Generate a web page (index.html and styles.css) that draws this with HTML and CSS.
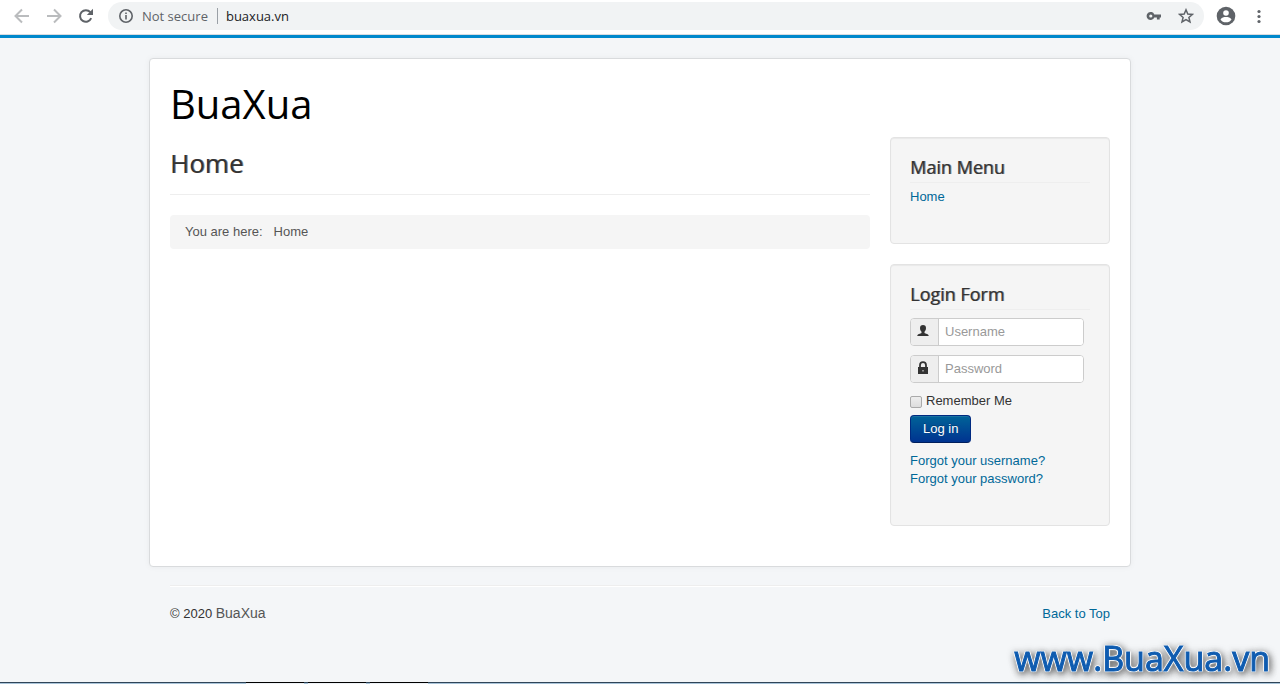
FILE: index.html
```html
<!DOCTYPE html>
<html lang="en">
<head>
    <meta charset="utf-8" />
    <meta name="viewport" content="width=device-width, initial-scale=1" />
    <title>Home</title>
    <link rel="stylesheet" href="styles.css">
</head>
<body id="top">
    <!-- Browser toolbar -->
    <div class="toolbar">
        <button class="tool disabled" type="button" aria-label="Back">
            <svg width="16" height="16" viewBox="0 0 16 16" fill="none" stroke="currentColor" stroke-width="2"><path d="M15 8H2M8 1.5L1.5 8L8 14.5"/></svg>
        </button>
        <button class="tool disabled" type="button" aria-label="Forward">
            <svg width="16" height="16" viewBox="0 0 16 16" fill="none" stroke="currentColor" stroke-width="2"><path d="M1 8H14M8 1.5L14.5 8L8 14.5"/></svg>
        </button>
        <button class="tool" type="button" aria-label="Reload">
            <svg width="16" height="16" viewBox="0 0 16 16"><path d="M13.2 10.2A5.8 5.8 0 1 1 12.3 4.2" fill="none" stroke="currentColor" stroke-width="2"/><path d="M15 .8V7H8.8Z" fill="currentColor"/></svg>
        </button>
        <div class="omnibox">
            <svg class="info" width="16" height="16" viewBox="0 0 16 16"><circle cx="8" cy="8" r="6.2" fill="none" stroke="currentColor" stroke-width="1.6"/><path d="M7.2 7h1.6v4.4H7.2zM7.2 4.4h1.6V6H7.2z" fill="currentColor"/></svg>
            <span class="secure">Not secure</span>
            <input class="url" type="text" value="buaxua.vn" aria-label="Address">
            <button class="tool" type="button" aria-label="Saved passwords">
                <svg width="16" height="16" viewBox="0 0 16 16"><path fill="currentColor" fill-rule="evenodd" d="M8.3 6.5H15V9.4H13.7V11.5H10.9V9.4H8.3A4 4 0 1 1 8.3 6.5ZM4.8 6.4A1.6 1.6 0 1 0 4.8 9.6A1.6 1.6 0 1 0 4.8 6.4Z"/></svg>
            </button>
            <button class="tool" type="button" aria-label="Bookmark this page">
                <svg width="16" height="16" viewBox="0 0 16 16"><path fill="none" stroke="currentColor" stroke-width="1.5" d="M8 1.8L9.8 6L14.4 6.4L10.9 9.4L12 13.9L8 11.5L4 13.9L5.1 9.4L1.6 6.4L6.2 6Z"/></svg>
            </button>
        </div>
        <button class="tool" type="button" aria-label="Profile">
            <svg width="20" height="20" viewBox="0 0 20 20"><circle cx="10" cy="10" r="9.3" fill="currentColor"/><circle cx="10" cy="7" r="2.8" fill="#fff"/><path d="M4.5 13.4C5.5 11.5 8 11 10 11S14.5 11.5 15.5 13.4C14.3 15.3 12.3 16.3 10 16.3S5.7 15.3 4.5 13.4Z" fill="#fff"/></svg>
        </button>
        <button class="tool" type="button" aria-label="Menu">
            <svg width="16" height="16" viewBox="0 0 16 16" fill="currentColor"><circle cx="8" cy="3.5" r="1.6"/><circle cx="8" cy="8.5" r="1.6"/><circle cx="8" cy="13.5" r="1.6"/></svg>
        </button>
    </div>

    <div class="site">
        <div class="container">
            <header class="header">
                <a class="brand" href="#">BuaXua</a>
            </header>
            <div class="row">
                <main class="content">
                    <div class="page-header">
                        <h2>Home</h2>
                    </div>
                    <ul class="breadcrumb">
                        <li>You are here:</li>
                        <li>Home</li>
                    </ul>
                </main>
                <aside class="sidebar">
                    <div class="well">
                        <h3>Main Menu</h3>
                        <ul class="nav">
                            <li><a href="#">Home</a></li>
                        </ul>
                    </div>
                    <div class="well">
                        <h3>Login Form</h3>
                        <form class="login">
                            <div class="input-prepend">
                                <label class="add-on" for="username" aria-label="Username">
                                    <svg width="14" height="14" viewBox="0 0 14 14" fill="currentColor"><path d="M7 1C9 1 10 2.2 10 4C10 5.8 9.3 7 8.5 7.8V9C9.5 9.6 12.7 9.8 12.7 12H1.3C1.3 9.8 4.5 9.6 5.5 9V7.8C4.7 7 4 5.8 4 4C4 2.2 5 1 7 1Z"/></svg>
                                </label>
                                <input id="username" type="text" placeholder="Username">
                            </div>
                            <div class="input-prepend">
                                <label class="add-on" for="password" aria-label="Password">
                                    <svg width="14" height="14" viewBox="0 0 14 14"><path d="M4 7V4.2C4 .2 10 .2 10 4.2V7" fill="none" stroke="currentColor" stroke-width="1.8"/><path d="M2 6H12V13H2Z" fill="currentColor"/><path d="M6.5 9h1v1.5h-1z" fill="#eee"/></svg>
                                </label>
                                <input id="password" type="password" placeholder="Password">
                            </div>
                            <div class="remember">
                                <input id="remember" type="checkbox">
                                <label for="remember">Remember Me</label>
                            </div>
                            <button class="btn" type="button">Log in</button>
                            <ul class="nav">
                                <li><a href="#">Forgot your username?</a></li>
                                <li><a href="#">Forgot your password?</a></li>
                            </ul>
                        </form>
                    </div>
                </aside>
            </div>
        </div>

        <footer class="footer">
            <p>© 2020 <span>BuaXua</span></p>
            <a href="#top">Back to Top</a>
        </footer>
    </div>

    <!-- Top edge of the taskbar -->
    <div class="taskbar">
        <span class="task"></span>
        <span class="task"></span>
        <span class="task"></span>
    </div>

    <div class="watermark">www.BuaXua.vn</div>
</body>
</html>
```

FILE: styles.css
```css
* {
    box-sizing: border-box;
}

body {
    margin: 0;
    min-height: 100vh;
    display: flex;
    flex-direction: column;
    background-color: #f4f6f8;
    color: #333;
    font-family: "Liberation Sans", Arial, sans-serif;
    font-size: 13px;
    line-height: 18px;
}

h2, h3, p, ul {
    margin: 0;
    padding: 0;
}

h2, h3 {
    font-family: "Open Sans", sans-serif;
    font-weight: 500;
    text-shadow: 1px 0 0 rgba(51, 51, 51, 0.6);
}

ul {
    list-style: none;
}

a {
    color: #006898;
    text-decoration: none;
}

a:hover {
    text-decoration: underline;
}

/* browser toolbar */
.toolbar {
    display: flex;
    align-items: center;
    gap: 16px;
    height: 35px;
    padding: 0 14px 3px;
    background: #fff;
    border-bottom: 1px solid #dadce0;
    color: #5f6368;
    font-family: "Open Sans", sans-serif;
}

.tool {
    display: flex;
    padding: 0;
    border: 0;
    background: none;
    color: #5f6368;
}

.disabled {
    color: #babcbe;
}

.omnibox {
    flex: 1;
    display: flex;
    align-items: center;
    height: 28px;
    margin-right: -4px;
    margin-left: -2px;
    padding: 0 10px;
    border-radius: 14px;
    background: #f1f3f4;
}

.omnibox .tool {
    margin-left: 16px;
}

.toolbar > .tool:last-child {
    margin-right: -1px;
    margin-left: -1px;
}

.secure {
    margin-left: 8px;
    padding-right: 9px;
    border-right: 1px solid #9aa0a6;
    line-height: 16px;
}

.url {
    flex: 1;
    min-width: 0;
    padding: 0 8px;
    border: 0;
    outline: 0;
    background: none;
    color: #202124;
    font: inherit;
}

/* site */
.site {
    flex: 1;
    padding: 20px;
    border-top: 3px solid #0088cc;
}

.container {
    max-width: 982px;
    margin: 0 auto;
    padding: 20px;
    background: #fff;
    border: 1px solid #d9dbdd;
    border-radius: 4px;
    box-shadow: 0 0 6px rgba(0, 0, 0, 0.05);
}

.header {
    padding-bottom: 8px;
}

.brand {
    display: inline-block;
    color: #000;
    font-family: "Open Sans", sans-serif;
    font-size: 40px;
    line-height: 50px;
    vertical-align: top;
}

.row {
    display: flex;
    gap: 20px;
}

.content {
    flex: 1;
}

.page-header {
    padding: 8px 0 13px;
    margin-bottom: 20px;
    border-bottom: 1px solid #eee;
}

.page-header h2 {
    font-size: 26px;
    line-height: 36px;
}

.breadcrumb {
    display: flex;
    gap: 11px;
    padding: 8px 15px;
    border-radius: 4px;
    background: #f5f5f5;
    color: #555;
}

.sidebar {
    width: 220px;
}

.well {
    min-height: 107px;
    margin-bottom: 20px;
    padding: 17px 19px 37px;
    background: #f5f5f5;
    border: 1px solid #e3e3e3;
    border-radius: 4px;
    box-shadow: inset 0 1px 1px rgba(0, 0, 0, 0.05);
}

.well h3 {
    margin-bottom: 5px;
    padding-bottom: 2px;
    border-bottom: 1px solid #eee;
    font-size: 18px;
    line-height: 25px;
}

.login {
    padding-top: 3px;
}

.input-prepend {
    display: flex;
    width: 174px;
    height: 28px;
    margin-bottom: 9px;
    border: 1px solid #ccc;
    border-radius: 4px;
    background: #fff;
    overflow: hidden;
}

.add-on {
    flex: none;
    width: 28px;
    padding: 5px;
    background: #eee;
    border-right: 1px solid #ccc;
}

.input-prepend input {
    width: 100%;
    min-width: 0;
    padding: 0 6px;
    border: 0;
    outline: 0;
    color: #555;
    font: inherit;
}

.input-prepend input::placeholder {
    color: #999;
}

.remember {
    display: flex;
    align-items: center;
    gap: 4px;
    margin-bottom: 5px;
}

.remember input {
    appearance: none;
    width: 12px;
    height: 12px;
    margin: 2px 0 0;
    border: 1px solid #aaa;
    border-radius: 2px;
    background: linear-gradient(#eee, #ddd);
}

.remember input:checked {
    background: #0088cc;
}

.btn {
    display: block;
    height: 28px;
    padding: 0 12px;
    margin-bottom: 9px;
    border: 1px solid #002a80;
    border-bottom-color: #001f5c;
    border-radius: 4px;
    background: linear-gradient(#006398, #003390);
    box-shadow: inset 0 1px 0 rgba(255, 255, 255, 0.1);
    color: #fff;
    font: inherit;
    text-shadow: 0 -1px 0 rgba(0, 0, 0, 0.25);
}

.footer {
    display: flex;
    justify-content: space-between;
    max-width: 940px;
    margin: 18px auto 0;
    padding-top: 19px;
    border-top: 1px solid #eee;
    box-shadow: inset 0 1px 0 #fff;
}

.footer span {
    color: #555;
    font-size: 14px;
    line-height: 16px;
}

/* taskbar */
.taskbar {
    display: flex;
    gap: 4px;
    height: 2px;
    padding-left: 246px;
    background: linear-gradient(#2f4558 50%, #a9c4d9 50%);
}

.task {
    width: 58px;
    height: 2px;
    background: linear-gradient(#000 50%, #eef2f6 50%);
}

.watermark {
    position: fixed;
    right: 10px;
    bottom: 2px;
    color: #0f5cb0;
    font-family: "Open Sans", sans-serif;
    font-size: 34px;
    line-height: 48px;
    -webkit-text-stroke: 1px #0f5cb0;
    text-shadow: -1px 0 0 #fff, 1px 0 0 #fff, 0 -1px 0 #fff, 0 1px 0 #fff,
        -1px -1px 1px #fff, 1px -1px 1px #fff, -1px 1px 1px #fff, 1px 1px 1px #fff,
        2px 2px 6px #555, 1px 3px 8px #666, 1px 1px 8px #777;
    pointer-events: none;
}

@media (max-width: 767px) {
    .row {
        flex-direction: column;
    }

    .sidebar {
        width: auto;
    }
}
```
